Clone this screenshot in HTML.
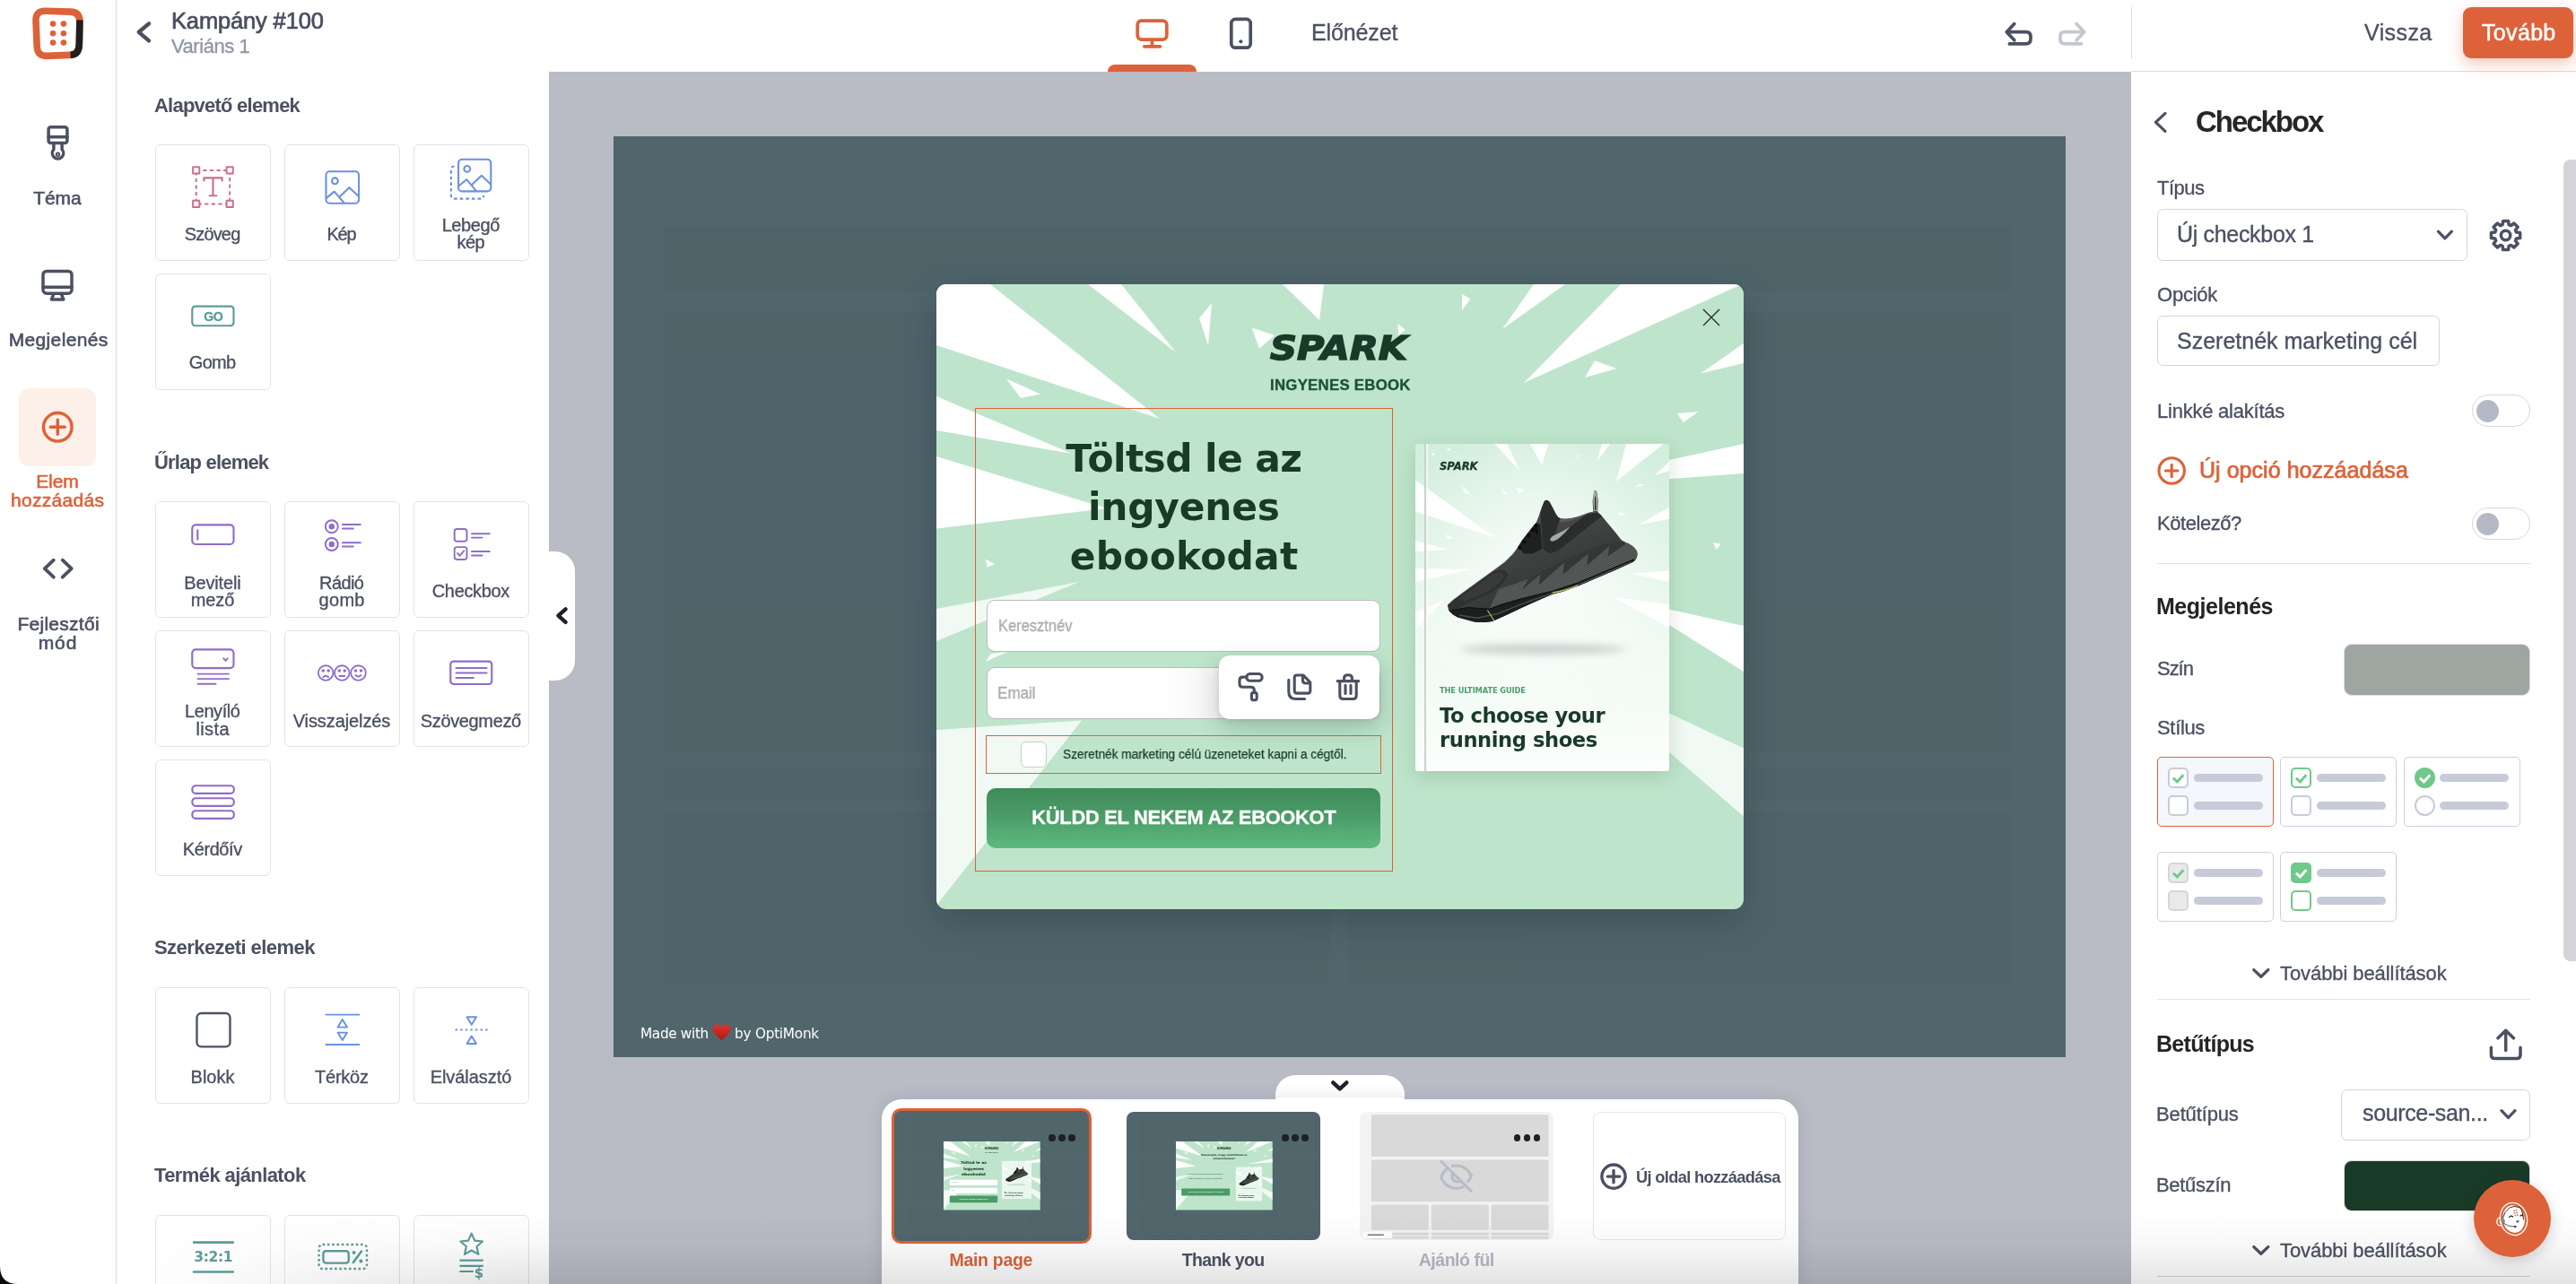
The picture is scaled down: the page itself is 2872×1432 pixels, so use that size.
<!DOCTYPE html>
<html lang="hu"><head><meta charset="utf-8"><title>OptiMonk editor</title>
<style>
*{box-sizing:border-box;margin:0;padding:0}
html,body{width:2872px;height:1432px;overflow:hidden;background:#fff}
body{position:relative;font-family:"Liberation Sans",sans-serif;color:#4b5162}
.t{position:absolute;white-space:nowrap;display:block;will-change:transform}
.a{position:absolute;display:block}
svg{position:absolute;display:block;overflow:visible}
.card{position:absolute;width:129px;height:129.5px;border:1px solid #e2e3e8;border-radius:6px;background:#fff}
.tog{position:absolute;width:65px;height:36px;border:1px solid #d5d7de;border-radius:18px;background:#fff}
.tog i{position:absolute;left:3.5px;top:4.5px;width:25px;height:25px;border-radius:50%;background:#b5b9c6}
.sc{position:absolute;width:130px;height:78px;border:1px solid #cdd0dc;border-radius:5px;background:#fff}
.sc b{position:absolute;left:39.5px;width:77.4px;height:9px;border-radius:4.5px;background:#c7cad8}
.sc u{position:absolute;left:11px;width:23px;height:23px;border-radius:5px;border:2px solid #c9ccda;background:#fff}

</style></head>
<body>

<!-- frame -->

<div class="a" style="left:612px;top:80px;width:1764px;height:1352px;background:#b9bcc5"></div>
<div class="a" style="left:684px;top:152px;width:1619px;height:1027px;background:#51666c"></div>
<div class="a" style="left:129px;top:0;width:1px;height:1432px;background:#dcdde3"></div>
<div class="a" style="left:2376px;top:8px;width:1px;height:57px;background:#d9dbe2"></div>
<div class="a" style="left:2376px;top:79px;width:496px;height:1px;background:#dcdde2"></div>

<!-- topbar -->

<svg style="left:0;top:0" width="130" height="80" viewBox="0 0 130 80">
 <path d="M50.6 12.3 L78.2 13.1 Q89.2 13.4 88.9 24.4 L88.3 50 Q88 61 77 61.4 L52.6 62.4 Q41.6 62.8 41.2 51.8 L40 23 Q39.6 12 50.6 12.3 Z" fill="none" stroke="#dd6239" stroke-width="7.6"/>
 <path d="M88.95 22.3 L88.3 50 Q88 61 78.6 61.35" fill="none" stroke="#211f1d" stroke-width="7.6"/>
 <g fill="#dd6239"><circle cx="59.1" cy="26.6" r="3.3"/><circle cx="70.9" cy="26.6" r="3.3"/><circle cx="59.1" cy="37.2" r="3.3"/><circle cx="70.9" cy="37.2" r="3.3"/><circle cx="59.1" cy="47.6" r="3.3"/><circle cx="70.9" cy="47.6" r="3.3"/></g>
</svg>
<svg style="left:0;top:0" width="2872" height="80" viewBox="0 0 2872 80" fill="none" stroke-linecap="round" stroke-linejoin="round">
 <polyline points="166,26.4 154.8,35.8 166,45.4" stroke="#4a4f5e" stroke-width="4.4"/>
 <g stroke="#dd6239" stroke-width="3.7">
  <rect x="1268.2" y="23.1" width="32.6" height="21" rx="4.5"/>
  <path d="M1284.5 44.5 V51.5 M1275.8 51.8 H1293.4"/>
 </g>
 <rect x="1235" y="72" width="99" height="16" rx="8" fill="#dd6239"/>
 <g stroke="#4b5162" stroke-width="3.7">
  <rect x="1372.8" y="21.4" width="21.4" height="31.8" rx="4.5"/>
 </g>
 <circle cx="1383.4" cy="46.3" r="2.1" fill="#4b5162"/>
 <g stroke="#4b5162" stroke-width="3.7">
  <path d="M2245.8 26.6 L2237.2 35.7 L2245.8 44.8 M2238 35.7 H2258.7 Q2264 35.7 2264 41 V43.6 Q2264 48.9 2258.7 48.9 H2240.4"/>
 </g>
 <g stroke="#c3c7cf" stroke-width="3.7">
  <path d="M2315.1 26.6 L2323.7 35.7 L2315.1 44.8 M2322.9 35.7 H2302.2 Q2296.9 35.7 2296.9 41 V43.6 Q2296.9 48.9 2302.2 48.9 H2320.5"/>
 </g>
</svg>
<div class="a" style="left:612px;top:80px;width:1764px;height:10px;background:#b9bcc5"></div>
<div class="a" style="left:2746px;top:8px;width:123px;height:57px;border-radius:9px;background:#dd6239;box-shadow:0 6px 18px rgba(221,98,57,.35)"></div>
<span class="t" id="t0" style="top:11.4px;font:400 25.5px/1 'Liberation Sans', sans-serif;color:#4a4f5e;letter-spacing:-0.15px;-webkit-text-stroke:0.7px #4a4f5e;left:190.5px;">Kampány #100</span><span class="t" id="t1" style="top:41.4px;font:400 22px/1 'Liberation Sans', sans-serif;color:#8f96a8;letter-spacing:-0.46px;-webkit-text-stroke:0.35px #8f96a8;left:190.8px;">Variáns 1</span><span class="t" id="t2" style="top:24.4px;font:400 25px/1 'Liberation Sans', sans-serif;color:#4b5162;letter-spacing:-0.12px;-webkit-text-stroke:0.35px #4b5162;left:1461.5px;">Előnézet</span><span class="t" id="t3" style="top:23.8px;font:400 25px/1 'Liberation Sans', sans-serif;color:#4b5162;letter-spacing:0.41px;-webkit-text-stroke:0.35px #4b5162;left:2636.0px;">Vissza</span><span class="t" id="t4" style="top:23.8px;font:400 25px/1 'Liberation Sans', sans-serif;color:#fff;letter-spacing:0.33px;-webkit-text-stroke:0.5px #fff;left:2767.0px;">Tovább</span>
<!-- rail -->

<div class="a" style="left:21px;top:433px;width:86px;height:87px;border-radius:12px;background:#fdf0e8"></div>
<svg style="left:0;top:120px" width="130" height="640" viewBox="0 120 130 640" fill="none" stroke-linecap="round" stroke-linejoin="round">
 <g stroke="#4b5162" stroke-width="3.5">
  <rect x="54.1" y="141.8" width="20.8" height="17.6" rx="2.5"/>
  <path d="M54.1 152.7 H74.9 M59.9 160 V166.6 A6.2 6.2 0 1 0 69.1 166.6 V160"/>
  <rect x="48" y="302.4" width="32" height="24.8" rx="4"/>
  <path d="M48 320.2 H80 M59.8 328 L57.4 334 H70.8 L68.4 328"/>
  <path d="M59.8 624.7 L49.8 634.2 L59.8 643.7 M69.7 624.7 L79.7 634.2 L69.7 643.7" stroke-width="3.8"/>
 </g>
 <circle cx="64.5" cy="172.3" r="1.7" stroke="#4b5162" stroke-width="2"/>
 <g stroke="#dd6239" stroke-width="3.4">
  <circle cx="64.3" cy="476.3" r="15.8"/>
  <path d="M64.3 468.3 V484.3 M56.3 476.3 H72.3"/>
 </g>
</svg>
<span class="t" id="t5" style="top:209.5px;font:400 21px/1 'Liberation Sans', sans-serif;color:#4b5162;letter-spacing:-0.11px;-webkit-text-stroke:0.6px #4b5162;left:-335.6px;width:800px;text-align:center;text-indent:-0.11px;">Téma</span><span class="t" id="t6" style="top:368.2px;font:400 21px/1 'Liberation Sans', sans-serif;color:#4b5162;letter-spacing:0.37px;-webkit-text-stroke:0.6px #4b5162;left:-335.3px;width:800px;text-align:center;text-indent:0.37px;">Megjelenés</span><span class="t" id="t7" style="top:526.0px;font:400 21px/1 'Liberation Sans', sans-serif;color:#dd6239;letter-spacing:-0.07px;-webkit-text-stroke:0.6px #dd6239;left:-335.6px;width:800px;text-align:center;text-indent:-0.07px;">Elem</span><span class="t" id="t8" style="top:547.2px;font:400 21px/1 'Liberation Sans', sans-serif;color:#dd6239;letter-spacing:0.28px;-webkit-text-stroke:0.6px #dd6239;left:-335.6px;width:800px;text-align:center;text-indent:0.28px;">hozzáadás</span><span class="t" id="t9" style="top:684.9px;font:400 21px/1 'Liberation Sans', sans-serif;color:#4b5162;letter-spacing:0.28px;-webkit-text-stroke:0.6px #4b5162;left:-335.5px;width:800px;text-align:center;text-indent:0.28px;">Fejlesztői</span><span class="t" id="t10" style="top:706.1px;font:400 21px/1 'Liberation Sans', sans-serif;color:#4b5162;letter-spacing:0.90px;-webkit-text-stroke:0.6px #4b5162;left:-335.6px;width:800px;text-align:center;text-indent:0.90px;">mód</span>
<!-- elements -->
<span class="t" id="t11" style="top:107.4px;font:700 22px/1 'Liberation Sans', sans-serif;color:#4b5162;letter-spacing:-0.77px;left:172.2px;">Alapvető elemek</span><div class="card" style="left:173px;top:161px"><svg width="129" height="129" viewBox="0 0 129 129" style="left:-1px;top:-1px" fill="none" stroke-linecap="round" stroke-linejoin="round"><g stroke="#cf6e8f" stroke-width="1.95"><path d="M45.7 28.9 H83.2 V66.4 H45.7 Z" stroke-dasharray="4.2 3.4" stroke-linecap="butt"/><rect x="42.1" y="25.299999999999997" width="7.2" height="7.2" fill="#fff"/><rect x="79.60000000000001" y="25.299999999999997" width="7.2" height="7.2" fill="#fff"/><rect x="42.1" y="62.800000000000004" width="7.2" height="7.2" fill="#fff"/><rect x="79.60000000000001" y="62.800000000000004" width="7.2" height="7.2" fill="#fff"/><path d="M54.4 40.5 V37.3 H74.6 V40.5 M64.5 37.3 V57.2 M60.6 57.2 H68.4" stroke-width="2.15"/></g></svg></div><span class="t" id="t12" style="top:250.9px;font:400 20px/1 'Liberation Sans', sans-serif;color:#4b5162;letter-spacing:-0.84px;-webkit-text-stroke:0.35px #4b5162;left:-162.6px;width:800px;text-align:center;text-indent:-0.84px;">Szöveg</span><div class="card" style="left:317px;top:161px"><svg width="129" height="129" viewBox="0 0 129 129" style="left:-1px;top:-1px" fill="none" stroke-linecap="round" stroke-linejoin="round"><g stroke="#6b8fe2" stroke-width="2.05"><rect x="46.5" y="30.2" width="36.6" height="35.6" rx="4"/><circle cx="56.4" cy="40.8" r="3.4"/><path d="M47.2 59.6 L55.7 52.6 L66.4 65 M61.3 58.8 L72.4 48.2 L82.4 57.6"/></g></svg></div><span class="t" id="t13" style="top:250.9px;font:400 20px/1 'Liberation Sans', sans-serif;color:#4b5162;letter-spacing:-1.20px;-webkit-text-stroke:0.35px #4b5162;left:-18.6px;width:800px;text-align:center;text-indent:-1.20px;">Kép</span><div class="card" style="left:461px;top:161px"><svg width="129" height="129" viewBox="0 0 129 129" style="left:-1px;top:-1px" fill="none" stroke-linecap="round" stroke-linejoin="round"><g stroke="#6b8fe2" stroke-width="2.05"><path d="M45.5 24.5 Q41.9 24.5 41.9 28.5 V56.5 Q41.9 60.6 46 60.6 H74 Q78.2 60.6 78.2 57" stroke-dasharray="3.6 3" stroke-linecap="butt"/><rect x="50.1" y="16.8" width="36.2" height="35.6" rx="4"/><circle cx="59.8" cy="27.4" r="3.4"/><path d="M50.6 46.2 L59.1 39.2 L69.80000000000001 51.6 M64.7 45.4 L75.80000000000001 34.800000000000004 L85.80000000000001 44.2"/></g></svg></div><span class="t" id="t14" style="top:240.9px;font:400 20px/1 'Liberation Sans', sans-serif;color:#4b5162;letter-spacing:-0.41px;-webkit-text-stroke:0.35px #4b5162;left:125.4px;width:800px;text-align:center;text-indent:-0.41px;">Lebegő</span><span class="t" id="t15" style="top:259.8px;font:400 20px/1 'Liberation Sans', sans-serif;color:#4b5162;letter-spacing:-0.62px;-webkit-text-stroke:0.35px #4b5162;left:125.4px;width:800px;text-align:center;text-indent:-0.62px;">kép</span><div class="card" style="left:173px;top:305px"><svg width="129" height="129" viewBox="0 0 129 129" style="left:-1px;top:-1px" fill="none" stroke-linecap="round" stroke-linejoin="round"><rect x="41.3" y="36.6" width="46.2" height="21.6" rx="3.5" stroke="#5b9d99" stroke-width="2.15"/></svg></div><span class="t" id="t16" style="top:394.0px;font:400 20px/1 'Liberation Sans', sans-serif;color:#4b5162;letter-spacing:-0.66px;-webkit-text-stroke:0.35px #4b5162;left:-162.6px;width:800px;text-align:center;text-indent:-0.66px;">Gomb</span><span class="t" id="t17" style="top:345.5px;font:700 14.2px/1 'Liberation Sans', sans-serif;color:#5b9d99;letter-spacing:-0.37px;-webkit-text-stroke:0.3px #5b9d99;left:-162.5px;width:800px;text-align:center;text-indent:-0.37px;">GO</span><span class="t" id="t18" style="top:505.2px;font:700 22px/1 'Liberation Sans', sans-serif;color:#4b5162;letter-spacing:-0.81px;left:172.2px;">Űrlap elemek</span><div class="card" style="left:173px;top:559px"><svg width="129" height="129" viewBox="0 0 129 129" style="left:-1px;top:-1px" fill="none" stroke-linecap="round" stroke-linejoin="round"><g stroke="#8f6dc9" stroke-width="2.15"><rect x="41.3" y="26.4" width="46.2" height="21.6" rx="4"/><path d="M47.3 32.4 V42.6"/></g></svg></div><span class="t" id="t19" style="top:639.5px;font:400 20px/1 'Liberation Sans', sans-serif;color:#4b5162;letter-spacing:-0.13px;-webkit-text-stroke:0.35px #4b5162;left:-162.6px;width:800px;text-align:center;text-indent:-0.13px;">Beviteli</span><span class="t" id="t20" style="top:659.4px;font:400 20px/1 'Liberation Sans', sans-serif;color:#4b5162;letter-spacing:-0.07px;-webkit-text-stroke:0.35px #4b5162;left:-162.6px;width:800px;text-align:center;text-indent:-0.07px;">mező</span><div class="card" style="left:317px;top:559px"><svg width="129" height="129" viewBox="0 0 129 129" style="left:-1px;top:-1px" fill="none" stroke-linecap="round" stroke-linejoin="round"><g stroke="#8f6dc9" stroke-width="1.95"><circle cx="52.8" cy="28.2" r="7"/><circle cx="52.8" cy="48" r="7"/><circle cx="52.8" cy="28.2" r="3.2" fill="#8f6dc9" stroke="none"/><circle cx="52.8" cy="48" r="3.2" fill="#8f6dc9" stroke="none"/><path d="M64.8 26 H84.8 M64.8 30.4 H76.8 M64.8 46.2 H84.8 M64.8 50.5 H76.8"/></g></svg></div><span class="t" id="t21" style="top:639.5px;font:400 20px/1 'Liberation Sans', sans-serif;color:#4b5162;letter-spacing:-0.59px;-webkit-text-stroke:0.35px #4b5162;left:-18.6px;width:800px;text-align:center;text-indent:-0.59px;">Rádió</span><span class="t" id="t22" style="top:659.4px;font:400 20px/1 'Liberation Sans', sans-serif;color:#4b5162;letter-spacing:0.32px;-webkit-text-stroke:0.35px #4b5162;left:-18.6px;width:800px;text-align:center;text-indent:0.32px;">gomb</span><div class="card" style="left:461px;top:559px"><svg width="129" height="129" viewBox="0 0 129 129" style="left:-1px;top:-1px" fill="none" stroke-linecap="round" stroke-linejoin="round"><g stroke="#8f6dc9" stroke-width="1.95"><rect x="45.7" y="30.9" width="13.8" height="13.8" rx="2.6"/><rect x="45.7" y="51.1" width="13.8" height="13.8" rx="2.6"/><path d="M49 58 L51.6 60.8 L56.4 55.2 M65 36.2 H84.8 M65 40.6 H76.6 M65 56 H84.8 M65 60.4 H76.6"/></g></svg></div><span class="t" id="t23" style="top:648.9px;font:400 20px/1 'Liberation Sans', sans-serif;color:#4b5162;letter-spacing:-0.36px;-webkit-text-stroke:0.35px #4b5162;left:125.4px;width:800px;text-align:center;text-indent:-0.36px;">Checkbox</span><div class="card" style="left:173px;top:703px"><svg width="129" height="129" viewBox="0 0 129 129" style="left:-1px;top:-1px" fill="none" stroke-linecap="round" stroke-linejoin="round"><g stroke="#8f6dc9" stroke-width="2.15"><rect x="41.3" y="21.3" width="46.2" height="20.8" rx="4"/><path d="M76.2 31.4 L78.5 33.7 L80.8 31.4 M47.5 48.6 H82 M47.5 54.1 H82 M47.5 59.7 H67.5" stroke-width="1.95"/></g></svg></div><span class="t" id="t24" style="top:782.9px;font:400 20px/1 'Liberation Sans', sans-serif;color:#4b5162;letter-spacing:-0.42px;-webkit-text-stroke:0.35px #4b5162;left:-162.6px;width:800px;text-align:center;text-indent:-0.42px;">Lenyíló</span><span class="t" id="t25" style="top:802.7px;font:400 20px/1 'Liberation Sans', sans-serif;color:#4b5162;letter-spacing:0.41px;-webkit-text-stroke:0.35px #4b5162;left:-162.6px;width:800px;text-align:center;text-indent:0.41px;">lista</span><div class="card" style="left:317px;top:703px"><svg width="129" height="129" viewBox="0 0 129 129" style="left:-1px;top:-1px" fill="none" stroke-linecap="round" stroke-linejoin="round"><g stroke="#8f6dc9" stroke-width="1.85"><circle cx="46.2" cy="47.5" r="8.3"/><circle cx="43.2" cy="45" r="0.9" fill="#8f6dc9"/><circle cx="49.2" cy="45" r="0.9" fill="#8f6dc9"/><path d="M43.2 52.2 Q46.2 49.4 49.2 52.2"/><circle cx="64.3" cy="47.5" r="8.3"/><circle cx="61.3" cy="45" r="0.9" fill="#8f6dc9"/><circle cx="67.3" cy="45" r="0.9" fill="#8f6dc9"/><path d="M61.3 51 H67.3"/><circle cx="82.5" cy="47.5" r="8.3"/><circle cx="79.5" cy="45" r="0.9" fill="#8f6dc9"/><circle cx="85.5" cy="45" r="0.9" fill="#8f6dc9"/><path d="M79.5 50 Q82.5 53 85.5 50"/></g></svg></div><span class="t" id="t26" style="top:793.6px;font:400 20px/1 'Liberation Sans', sans-serif;color:#4b5162;letter-spacing:-0.09px;-webkit-text-stroke:0.35px #4b5162;left:-18.6px;width:800px;text-align:center;text-indent:-0.09px;">Visszajelzés</span><div class="card" style="left:461px;top:703px"><svg width="129" height="129" viewBox="0 0 129 129" style="left:-1px;top:-1px" fill="none" stroke-linecap="round" stroke-linejoin="round"><g stroke="#8f6dc9" stroke-width="2.15"><rect x="41.3" y="34.6" width="46" height="25.4" rx="3.5"/><path d="M47.5 42 H81.6 M47.5 47.5 H81.6 M47.5 53 H67" stroke-width="1.95"/></g></svg></div><span class="t" id="t27" style="top:793.6px;font:400 20px/1 'Liberation Sans', sans-serif;color:#4b5162;letter-spacing:-0.36px;-webkit-text-stroke:0.35px #4b5162;left:125.4px;width:800px;text-align:center;text-indent:-0.36px;">Szövegmező</span><div class="card" style="left:173px;top:847px"><svg width="129" height="129" viewBox="0 0 129 129" style="left:-1px;top:-1px" fill="none" stroke-linecap="round" stroke-linejoin="round"><g stroke="#8f6dc9" stroke-width="2.15"><rect x="41.4" y="29.2" width="46.4" height="8.6" rx="3.6"/><rect x="41.4" y="43.2" width="46.4" height="8.6" rx="3.6"/><rect x="41.4" y="57.2" width="46.4" height="8.6" rx="3.6"/></g></svg></div><span class="t" id="t28" style="top:937.3px;font:400 20px/1 'Liberation Sans', sans-serif;color:#4b5162;letter-spacing:-0.42px;-webkit-text-stroke:0.35px #4b5162;left:-162.6px;width:800px;text-align:center;text-indent:-0.42px;">Kérdőív</span><span class="t" id="t29" style="top:1046.2px;font:700 22px/1 'Liberation Sans', sans-serif;color:#4b5162;letter-spacing:-0.56px;left:172.2px;">Szerkezeti elemek</span><div class="card" style="left:173px;top:1101px"><svg width="129" height="129" viewBox="0 0 129 129" style="left:-1px;top:-1px" fill="none" stroke-linecap="round" stroke-linejoin="round"><rect x="46.5" y="29" width="37" height="37.4" rx="5" stroke="#4b5162" stroke-width="2.35"/></svg></div><span class="t" id="t30" style="top:1190.9px;font:400 20px/1 'Liberation Sans', sans-serif;color:#4b5162;letter-spacing:-0.03px;-webkit-text-stroke:0.35px #4b5162;left:-162.6px;width:800px;text-align:center;text-indent:-0.03px;">Blokk</span><div class="card" style="left:317px;top:1101px"><svg width="129" height="129" viewBox="0 0 129 129" style="left:-1px;top:-1px" fill="none" stroke-linecap="round" stroke-linejoin="round"><g stroke="#6b8fe2" stroke-width="1.95"><path d="M46.4 30.6 H83.4 M46.4 64 H83.4"/><path d="M64.8 36.1 L70.0 44.6 H59.599999999999994 Z"/><path d="M64.8 59.1 L70.0 50.6 H59.599999999999994 Z"/></g></svg></div><span class="t" id="t31" style="top:1190.9px;font:400 20px/1 'Liberation Sans', sans-serif;color:#4b5162;letter-spacing:-0.27px;-webkit-text-stroke:0.35px #4b5162;left:-18.6px;width:800px;text-align:center;text-indent:-0.27px;">Térköz</span><div class="card" style="left:461px;top:1101px"><svg width="129" height="129" viewBox="0 0 129 129" style="left:-1px;top:-1px" fill="none" stroke-linecap="round" stroke-linejoin="round"><g stroke="#6b8fe2" stroke-width="1.95"><path d="M46.6 47.5 H84" stroke-dasharray="2.4 3.2" stroke-linecap="butt"/><path d="M64.8 41.7 L70.0 33.2 H59.599999999999994 Z"/><path d="M64.8 54.5 L70.0 63 H59.599999999999994 Z"/></g></svg></div><span class="t" id="t32" style="top:1190.9px;font:400 20px/1 'Liberation Sans', sans-serif;color:#4b5162;letter-spacing:-0.05px;-webkit-text-stroke:0.35px #4b5162;left:125.4px;width:800px;text-align:center;text-indent:-0.05px;">Elválasztó</span><span class="t" id="t33" style="top:1299.9px;font:700 22px/1 'Liberation Sans', sans-serif;color:#4b5162;letter-spacing:-0.60px;left:172.2px;">Termék ajánlatok</span><div class="card" style="left:173px;top:1355px"><svg width="129" height="129" viewBox="0 0 129 129" style="left:-1px;top:-1px" fill="none" stroke-linecap="round" stroke-linejoin="round"><path d="M43 30.6 H86.8 M43 63.4 H86.8" stroke="#5b9d99" stroke-width="2.55"/></svg></div><span class="t" id="t34" style="top:1394.5px;font:700 15.5px/1 'DejaVu Sans', 'Liberation Sans', sans-serif;color:#5b9d99;letter-spacing:-0.37px;left:-162.2px;width:800px;text-align:center;text-indent:-0.37px;">3:2:1</span><div class="card" style="left:317px;top:1355px"><svg width="129" height="129" viewBox="0 0 129 129" style="left:-1px;top:-1px" fill="none" stroke-linecap="round" stroke-linejoin="round"><g stroke="#5b9d99" stroke-width="2.35"><rect x="38.6" y="33" width="53.4" height="27" rx="4" stroke-dasharray="2.6 2.7" stroke-linecap="butt"/><rect x="43.4" y="40.2" width="28.4" height="13.4" rx="3"/><path d="M76.8 53 L86 40.6" stroke-width="2.55"/></g><circle cx="77.6" cy="42" r="2" fill="#5b9d99"/><circle cx="85.4" cy="51.6" r="2" fill="#5b9d99"/></svg></div><div class="card" style="left:461px;top:1355px"><svg width="129" height="129" viewBox="0 0 129 129" style="left:-1px;top:-1px" fill="none" stroke-linecap="round" stroke-linejoin="round"><g stroke="#5b9d99" stroke-width="2.15"><path d="M64.7 20.6 L68.3 28.6 L77 29.5 L70.5 35.3 L72.4 43.9 L64.7 39.5 L57 43.9 L58.9 35.3 L52.4 29.5 L61.1 28.6 Z"/><path d="M52.2 50.6 H77 M52.2 56.8 H77 M52.2 63 H66"/></g></svg></div><span class="t" id="t35" style="top:1412.7px;font:700 15px/1 'DejaVu Sans', 'Liberation Sans', sans-serif;color:#5b9d99;left:133.6px;width:800px;text-align:center;">$</span>
<!-- canvas -->

<div class="a" style="left:612px;top:615px;width:29px;height:144px;border-radius:0 22px 22px 0;background:#fff"></div>
<svg style="left:612px;top:670px" width="30" height="34" viewBox="0 0 30 34" fill="none" stroke="#1f2126" stroke-width="4.4" stroke-linecap="round" stroke-linejoin="round"><path d="M18.6 9.4 L10.4 16.6 L18.6 23.8"/></svg>
<svg style="left:684px;top:152px" width="1619" height="1027" viewBox="0 0 1619 1027" fill="#4e6369" opacity=".55">
 <rect x="56" y="100" width="1502" height="72"/><rect x="56" y="196" width="1502" height="491"/>
 <rect x="56" y="704" width="1502" height="36" opacity=".6"/>
 <rect x="56" y="755" width="743" height="192"/><rect x="819" y="755" width="739" height="192"/>
</svg>
<span class="t" id="t36" style="top:1145.5px;font:400 15.3px/1 'DejaVu Sans', 'Liberation Sans', sans-serif;color:#fff;letter-spacing:-0.34px;left:713.6px;">Made with</span><span class="t" id="t37" style="top:1145.5px;font:400 15.3px/1 'DejaVu Sans', 'Liberation Sans', sans-serif;color:#fff;letter-spacing:-0.25px;left:819.0px;">by OptiMonk</span><svg style="left:793.5px;top:1142px" width="21" height="19" viewBox="0 0 21 19"><defs><linearGradient id="hg" x1="0" y1="0" x2="0" y2="1"><stop offset="0" stop-color="#e0332b"/><stop offset="1" stop-color="#a81d18"/></linearGradient></defs><path d="M10.5 18.4 C4.6 13.6 0.6 9.9 0.6 5.6 C0.6 2.6 2.9 0.6 5.6 0.6 C7.7 0.6 9.5 1.8 10.5 3.6 C11.5 1.8 13.3 0.6 15.4 0.6 C18.1 0.6 20.4 2.6 20.4 5.6 C20.4 9.9 16.4 13.6 10.5 18.4 Z" fill="url(#hg)"/></svg>
<!-- popup -->

<div class="a" style="left:1044px;top:317px;width:900px;height:697px;border-radius:11px;background:#bee5cb;box-shadow:0 14px 40px rgba(20,35,40,.28);overflow:hidden">
 <svg width="900" height="697" viewBox="0 0 900 697" style="left:0;top:0"><polygon points="0,0 60,0 249,150 0,68" fill="#fff"/><polygon points="169,0 206,0 267,76" fill="#fff"/><polygon points="0,125 0,163 151,189" fill="#fff"/><polygon points="0,192 190,250 0,272.5" fill="#fff"/><polygon points="386,0 432,0 427,40" fill="#fff"/><polygon points="666,0 701,0 631,50" fill="#fff"/><polygon points="655,110 763,0 898,0" fill="#fff"/><polygon points="852,99.5 900,66 900,88" fill="#fff"/><polygon points="669,228 900,178 900,211" fill="#fff"/><polygon points="774,353 900,381 900,432" fill="#fff"/><polygon points="78,105.5 116,122.6 94,127" fill="#fff"/><polygon points="293,38 307,21 303,68" fill="#fff"/><polygon points="351.7,48.5 377,57 360,71.7" fill="#fff"/><polygon points="514.3,44.3 523,50.8 515.5,57" fill="#fff"/><polygon points="586,11 595.4,16.3 586,29" fill="#fff"/><polygon points="734,85.2 758.4,94 723,104" fill="#fff"/><polygon points="825.7,144.1 849.5,142.3 832.7,153.9" fill="#fff"/><polygon points="865.8,288 874.7,289.5 869.8,296" fill="#fff"/><polygon points="54.5,306.6 65,312 57,315.6" fill="#fff"/><polygon points="55,421 61,412 78.6,410" fill="#fff"/><polygon points="0,362 159,332 0,398" fill="#fff" opacity="0.76"/><polygon points="0,497 162,486.5 3,689 0,697" fill="#fff" opacity="0.76"/><polygon points="707,427 900,517.6 900,593.6" fill="#fff" opacity="0.76"/></svg>
</div>
<!-- book -->
<div class="a" style="left:1578px;top:495px;width:283px;height:365px;border-radius:3px;background:linear-gradient(180deg,#d3eedc 0%,#dcf2e4 30%,#eef9f2 58%,#fbfefc 100%);box-shadow:0 6px 22px rgba(30,60,40,.16);overflow:hidden">
 <svg width="283" height="365" viewBox="0 0 283 365" style="left:0;top:0"><defs><filter id="bl" x="-20%" y="-100%" width="140%" height="300%"><feGaussianBlur stdDeviation="7 4"/></filter><radialGradient id="bg" cx="50%" cy="48%" r="58%"><stop offset="0" stop-color="#fff" stop-opacity=".85"/><stop offset=".5" stop-color="#fff" stop-opacity=".45"/><stop offset="1" stop-color="#fff" stop-opacity="0"/></radialGradient></defs>
 <rect width="283" height="300" fill="url(#bg)"/><g opacity=".95"><polygon points="88.3,0 102.5,0 116.7,30.2" fill="#fff"/><polygon points="127.6,0 148.5,0 141,23.5" fill="#fff"/><polygon points="208,0 217.2,0 202.1,20.1" fill="#fff"/><polygon points="234.8,0 276.6,0 223.9,41.9" fill="#fff"/><polygon points="283,20.1 283,30.2 266.6,35.2" fill="#fff"/><polygon points="283,70.4 283,83.8 248.2,90.5" fill="#fff"/><polygon points="283,141.5 283,154 239.8,144.9" fill="#fff"/><polygon points="283,179.2 283,205 219.7,170.8" fill="#fff"/><polygon points="0,40.2 90.8,105.5 0,75.4" fill="#fff"/><polygon points="0,108 0,120.6 37.2,118.1" fill="#fff"/><polygon points="0,139 0,154.1 64,139.8" fill="#fff"/><polygon points="0,187.6 0,208 32.2,174.2" fill="#fff"/><polygon points="17.1,10.1 21.3,10.9 20.5,13.4" fill="#fff"/><polygon points="34.7,5.9 38.9,5.1 38,8.4" fill="#fff"/><polygon points="53.1,46.9 62.3,57 53.9,54.5" fill="#fff"/><polygon points="95.8,47.8 103.3,57.8 98.3,55.3" fill="#fff"/><polygon points="112.5,48.6 121.8,51.1 115.1,56.1" fill="#fff"/><polygon points="181.2,11.8 182.9,13.4 180.3,16" fill="#fff"/><polygon points="244.8,48.6 255.7,46.1 250.7,44.4" fill="#fff"/><polygon points="225.5,76.2 235.6,78.7 228,79.6" fill="#fff"/><polygon points="33,101.3 42.2,104.7 36.4,106.4" fill="#fff"/></g>
 <rect x="10" y="0" width="2.2" height="365" fill="#c9d2cc"/><rect x="12.2" y="0" width="1.6" height="365" fill="#fff" opacity=".8"/>
 
<ellipse cx="142" cy="229" rx="92" ry="6" fill="#20302a" opacity=".2" filter="url(#bl)"/>
<svg x="-8" y="-10" width="300" height="215" viewBox="0 0 1792 1284">
 <defs><linearGradient id="sg" x1="0.2" y1="0" x2="0.8" y2="1"><stop offset="0" stop-color="#555856"/><stop offset=".55" stop-color="#3c3e3d"/><stop offset="1" stop-color="#2a2c2b"/></linearGradient>
 <pattern id="ht" width="11" height="11" patternUnits="userSpaceOnUse" patternTransform="rotate(62)"><rect width="11" height="11" fill="#666967"/><rect width="5" height="11" fill="#3b3d3c"/></pattern></defs>
 <path d="M262 1135 L300 1100 L380 1040 L470 975 L560 910 L640 850 L700 790 L730 748 L760 700 L800 650 L830 610 L852 586 L870 540 L890 480 L905 445 Q920 424 940 445 L960 480 L985 530 Q998 552 1012 556 Q1060 566 1130 545 L1200 520 L1232 512 L1228 440 L1238 380 Q1246 356 1258 385 L1265 440 L1262 515 L1290 540 L1330 590 L1380 650 L1420 700 L1445 715 Q1500 735 1522 772 Q1534 806 1512 834 Q1496 848 1478 856 L1380 900 L1250 955 L1130 1008 L1040 1040 L960 1062 L860 1105 L760 1150 L660 1198 L560 1243 Q500 1252 440 1245 L330 1215 Q285 1195 268 1165 Z" fill="url(#sg)"/>
 <path d="M1236 384 Q1246 360 1256 388 L1262 440 L1259 508 L1236 508 L1232 440 Z" fill="#a4aba6"/><path d="M1243 420 Q1246 396 1250 420 L1252 500 L1242 500 Z" fill="#262827"/>
 <path d="M880 520 L905 445 Q920 424 940 445 L960 480 L985 530 Q998 552 1012 556 L985 640 L968 700 L1200 520 L1262 515 L1290 540 L1000 770 L940 792 L898 760 Z" fill="#2b2d2c"/>
 <path d="M1012 556 Q1060 566 1130 545 L1200 520 L1232 512 L1262 515 L1200 524 L1130 556 Q1060 584 1006 580 Z" fill="#595c5a"/>
 <path d="M730 748 L760 700 L800 650 L830 610 L852 586 L880 596 L892 760 L830 792 L772 792 Z" fill="#1f2121"/>
 <g fill="#0d0d0d"><circle cx="744" cy="752" r="13"/><circle cx="772" cy="712" r="13"/><circle cx="802" cy="672" r="13"/><circle cx="830" cy="634" r="13"/><circle cx="852" cy="604" r="12"/><path d="M838 600 L852 594 L866 660 L852 664 Z"/></g>
 <path d="M946 692 Q958 672 988 662 Q1036 640 1078 612 Q1044 656 1004 688 Q972 712 952 708 Q942 702 946 692 Z" fill="#a6a9a6"/>
 <path d="M262 1135 L300 1100 L380 1040 L470 975 L560 910 Q640 876 666 932 Q640 1004 540 1060 L400 1120 L290 1168 Z" fill="#2f3130"/>
 <path d="M330 1095 L560 930 Q620 900 640 940 Q610 1000 520 1046 L380 1108 Z" fill="#3c3f3d" opacity=".8"/>
 <path d="M600 1030 L700 985 L800 960 L900 900 L1040 830 L1180 770 L1320 720 L1445 715 Q1500 735 1522 772 Q1534 806 1512 834 L1500 830 L1380 880 L1130 985 L960 1040 L760 1090 L620 1130 L540 1160 Z" fill="url(#ht)"/>
 <path d="M600 1030 L700 985 L800 960 L760 1030 L880 930 L870 1000 L1040 850 L1030 930 L1200 790 L1190 870 L1340 740 L1330 810 L1445 728 L1445 715 L1320 720 L1180 770 L1040 830 L900 900 L800 960 Z" fill="#353736"/>
 <path d="M268 1165 L290 1168 L400 1150 L540 1160 L620 1130 L760 1090 L960 1040 L1130 985 L1380 880 L1500 830 L1512 834 Q1496 848 1478 856 L1380 900 L1250 955 L1130 1008 L1040 1040 L960 1062 L860 1105 L760 1150 L660 1198 L560 1243 Q500 1252 440 1245 L330 1215 Q285 1195 268 1165 Z" fill="#1d1f1e"/>
 <path d="M340 1200 L460 1220 L600 1190 L760 1125 L960 1055 L1130 1000 L1380 892 L1490 846" fill="none" stroke="#4a4d4b" stroke-width="9"/>
 <path d="M290 1168 L400 1150 L540 1160 L620 1130 L760 1090 L960 1040 L1130 985 L1380 880 L1500 830" fill="none" stroke="#0f1010" stroke-width="6"/>
 <path d="M262 1135 L300 1100 L380 1040 L470 975 L560 910 L640 850" fill="none" stroke="#6a6d6b" stroke-width="6" opacity=".55"/>
 <path d="M960 1050 Q1060 1040 1130 1002" fill="none" stroke="#c6d26c" stroke-width="8"/><path d="M528 1168 L572 1238" fill="none" stroke="#bccb66" stroke-width="6"/>
</svg>
 </svg>
</div>
<!-- form block outline -->
<div class="a" style="left:1087px;top:454.5px;width:466px;height:517px;border:1.5px solid #dd6239"></div>
<div class="a" style="left:1100px;top:669px;width:439px;height:58px;border-radius:9px;background:#fff;border:1.5px solid #b9bcba"></div>
<div class="a" style="left:1100px;top:743.8px;width:439px;height:58.6px;border-radius:9px;background:linear-gradient(90deg,#fff 0%,#fff 45%,#f1f1f1 62%);border:1.5px solid #b9bcba"></div>
<div class="a" style="left:1099px;top:820px;width:441px;height:42.5px;border:1.5px solid #dd6239"></div>
<div class="a" style="left:1138px;top:827px;width:29px;height:29px;border-radius:6px;background:#fff;border:1.5px solid #c9cccb"></div>
<div class="a" style="left:1100px;top:879px;width:439px;height:67px;border-radius:10px;background:linear-gradient(180deg,#3f8c5b 0%,#4a9b67 45%,#5cbb7e 100%)"></div>
<!-- toolbar -->
<div class="a" style="left:1358.8px;top:731px;width:179.2px;height:71px;border-radius:12px;background:#fff;box-shadow:0 10px 28px rgba(30,50,40,.22),0 2px 6px rgba(30,50,40,.10)"></div>
<svg style="left:1370px;top:740px" width="160" height="50" viewBox="1370 740 160 50" fill="none" stroke="#4b5162" stroke-width="3.1" stroke-linecap="round" stroke-linejoin="round">
 <rect x="1389.9" y="751.5" width="17.2" height="7.8" rx="3.6"/>
 <path d="M1389.9 755.1 H1385.6 Q1382 755.1 1382 758.7 V762.7 Q1382 766.3 1385.6 766.3 H1394.8 Q1398.3 766.3 1398.3 769.8 V771.6"/>
 <rect x="1395.4" y="772.4" width="5.8" height="8.4" rx="2.4"/>
 <path d="M1445.8 753 H1453.1 L1460.8 761.1 V770.5 Q1460.8 773.1 1458.2 773.1 H1446.2 Q1443.2 773.1 1443.2 770.5 V755.6 Q1443.2 753 1445.8 753 Z M1452.4 753.6 V758.6 Q1452.4 762 1455.8 762 H1460.4 M1436.8 758.3 V771.4 Q1436.8 779.5 1444.9 779.5 H1454.6"/>
 <path d="M1491.2 759.6 H1514.8 M1498.6 759 V756 Q1498.6 752.7 1503 752.7 Q1507.4 752.7 1507.4 756 V759 M1493.8 760.6 V775.7 Q1493.8 779.5 1497.6 779.5 H1508.4 Q1512.2 779.5 1512.2 775.7 V760.6 M1500 764.4 V773.4 M1506 764.4 V773.4"/>
</svg>
<svg style="left:1898px;top:344px" width="20" height="20" viewBox="0 0 20 20" stroke="#2b2b2b" stroke-width="1.4"><path d="M1 1 L19 19 M19 1 L1 19"/></svg>
<span class="t" id="t38" style="top:370.1px;font:italic 700 37.2px/1 'DejaVu Sans', 'Liberation Sans', sans-serif;color:#1a3a28;-webkit-text-stroke:1.6px #1a3a28;left:1416.0px;transform:scaleX(1.1169);transform-origin:left center;">SPARK</span><span class="t" id="t39" style="top:421.8px;font:700 16.8px/1 'Liberation Sans', sans-serif;color:#1e5135;letter-spacing:0.27px;-webkit-text-stroke:0.35px #1e5135;left:1416.0px;">INGYENES EBOOK</span><span class="t" id="t40" style="top:491.2px;font:700 42.4px/1 'DejaVu Sans', 'Liberation Sans', sans-serif;color:#1a3a28;letter-spacing:-0.62px;left:919.6px;width:800px;text-align:center;text-indent:-0.62px;">Töltsd le az</span><span class="t" id="t41" style="top:545.1px;font:700 42.4px/1 'DejaVu Sans', 'Liberation Sans', sans-serif;color:#1a3a28;letter-spacing:-0.21px;left:919.8px;width:800px;text-align:center;text-indent:-0.21px;">ingyenes</span><span class="t" id="t42" style="top:599.5px;font:700 42.4px/1 'DejaVu Sans', 'Liberation Sans', sans-serif;color:#1a3a28;letter-spacing:0.21px;left:919.8px;width:800px;text-align:center;text-indent:0.21px;">ebookodat</span><span class="t" id="t43" style="top:688.6px;font:400 18.6px/1 'Liberation Sans', sans-serif;color:#a8acaa;-webkit-text-stroke:0.35px #a8acaa;left:1112.6px;transform:scaleX(0.8862);transform-origin:left center;">Keresztnév</span><span class="t" id="t44" style="top:763.7px;font:400 18.6px/1 'Liberation Sans', sans-serif;color:#a8acaa;-webkit-text-stroke:0.35px #a8acaa;left:1112.4px;transform:scaleX(0.9146);transform-origin:left center;">Email</span><span class="t" id="t45" style="top:833.3px;font:400 15.2px/1 'Liberation Sans', sans-serif;color:#1a3a28;-webkit-text-stroke:0.25px #1a3a28;left:1185.3px;transform:scaleX(0.8989);transform-origin:left center;">Szeretnék marketing célú üzeneteket kapni a cégtől.</span><span class="t" id="t46" style="top:900.7px;font:700 21.9px/1 'Liberation Sans', sans-serif;color:#fff;letter-spacing:-0.30px;-webkit-text-stroke:0.3px #fff;left:919.8px;width:800px;text-align:center;text-indent:-0.30px;">KÜLDD EL NEKEM AZ EBOOKOT</span><span class="t" id="t47" style="top:515.1px;font:italic 700 11.6px/1 'DejaVu Sans', 'Liberation Sans', sans-serif;color:#1a3a28;letter-spacing:-0.02px;-webkit-text-stroke:0.3px #1a3a28;left:1605.4px;">SPARK</span><span class="t" id="t48" style="top:765.7px;font:700 8.3px/1 'DejaVu Sans', 'Liberation Sans', sans-serif;color:#4e9e6c;letter-spacing:-0.12px;left:1605.4px;">THE ULTIMATE GUIDE</span><span class="t" id="t49" style="top:786.5px;font:700 22.6px/1 'DejaVu Sans', 'Liberation Sans', sans-serif;color:#1a3a28;letter-spacing:-0.45px;left:1605.0px;">To choose your</span><span class="t" id="t50" style="top:814.4px;font:700 22.6px/1 'DejaVu Sans', 'Liberation Sans', sans-serif;color:#1a3a28;letter-spacing:-0.41px;left:1605.0px;">running shoes</span>
<!-- pages -->

<div class="a" style="left:1421.5px;top:1198.5px;width:144.5px;height:40px;border-radius:22px 22px 0 0;background:#fff"></div>
<div class="a" style="left:982.5px;top:1226px;width:1022.5px;height:220px;border-radius:22px 22px 0 0;background:#fff;box-shadow:0 0 18px rgba(60,65,80,.16)"></div>
<div class="a" style="left:1424px;top:1224px;width:140px;height:6px;background:#fff"></div>
<svg style="left:1480px;top:1202px" width="28" height="18" viewBox="0 0 28 18" fill="none" stroke="#1f2126" stroke-width="4.4" stroke-linecap="round" stroke-linejoin="round"><path d="M6.2 5.4 L13.8 12.4 L21.4 5.4"/></svg>
<div class="a" style="left:994px;top:1236.3px;width:222.5px;height:151.2px;border-radius:10.5px;border:3.4px solid #dd6239;background:#51666c;overflow:hidden"><div class="a" style="left:0;top:0"><svg width="216" height="143" viewBox="0 0 216 143" style="left:0;top:0" stroke="#5a6f75" stroke-width="1" opacity=".55"><path d="M12 0 V143 M0 52 H216 M0 103 H216 M0 136 H216 M79 103 V143 M146 103 V143"/></svg></div></div><div class="a" style="left:1256px;top:1240px;width:216px;height:143.3px;border-radius:8px;background:#51666c;overflow:hidden"><svg width="216" height="143" viewBox="0 0 216 143" style="left:0;top:0" stroke="#5a6f75" stroke-width="1" opacity=".55"><path d="M12 0 V143 M0 52 H216 M0 103 H216 M0 136 H216 M79 103 V143 M146 103 V143"/></svg></div><svg style="left:1052px;top:1273.1px" width="107.7" height="76.5" viewBox="0 0 900 697" preserveAspectRatio="none"><rect width="900" height="697" fill="#bee5cb"/><polygon points="0,0 60,0 249,150 0,68" fill="#fff"/><polygon points="169,0 206,0 267,76" fill="#fff"/><polygon points="0,125 0,163 151,189" fill="#fff"/><polygon points="0,192 190,250 0,272.5" fill="#fff"/><polygon points="386,0 432,0 427,40" fill="#fff"/><polygon points="666,0 701,0 631,50" fill="#fff"/><polygon points="655,110 763,0 898,0" fill="#fff"/><polygon points="852,99.5 900,66 900,88" fill="#fff"/><polygon points="669,228 900,178 900,211" fill="#fff"/><polygon points="774,353 900,381 900,432" fill="#fff"/><polygon points="78,105.5 116,122.6 94,127" fill="#fff"/><polygon points="293,38 307,21 303,68" fill="#fff"/><polygon points="351.7,48.5 377,57 360,71.7" fill="#fff"/><polygon points="514.3,44.3 523,50.8 515.5,57" fill="#fff"/><polygon points="586,11 595.4,16.3 586,29" fill="#fff"/><polygon points="734,85.2 758.4,94 723,104" fill="#fff"/><polygon points="825.7,144.1 849.5,142.3 832.7,153.9" fill="#fff"/><polygon points="865.8,288 874.7,289.5 869.8,296" fill="#fff"/><polygon points="54.5,306.6 65,312 57,315.6" fill="#fff"/><polygon points="55,421 61,412 78.6,410" fill="#fff"/><polygon points="0,362 159,332 0,398" fill="#fff" opacity="0.76"/><polygon points="0,497 162,486.5 3,689 0,697" fill="#fff" opacity="0.76"/><polygon points="707,427 900,517.6 900,593.6" fill="#fff" opacity="0.76"/><rect x="57" y="389" width="446" height="57" rx="9" fill="#fff"/><rect x="57" y="472" width="446" height="57" rx="9" fill="#fff"/>
<rect x="57" y="552" width="446" height="70" rx="10" fill="#4a9b67"/>
<svg x="543" y="198" width="276" height="384" viewBox="0 0 283 365" preserveAspectRatio="none"><rect width="283" height="365" fill="#e9f7ee"/><polygon points="88.3,0 102.5,0 116.7,30.2" fill="#fff"/><polygon points="127.6,0 148.5,0 141,23.5" fill="#fff"/><polygon points="208,0 217.2,0 202.1,20.1" fill="#fff"/><polygon points="234.8,0 276.6,0 223.9,41.9" fill="#fff"/><polygon points="283,20.1 283,30.2 266.6,35.2" fill="#fff"/><polygon points="283,70.4 283,83.8 248.2,90.5" fill="#fff"/><polygon points="283,141.5 283,154 239.8,144.9" fill="#fff"/><polygon points="283,179.2 283,205 219.7,170.8" fill="#fff"/><polygon points="0,40.2 90.8,105.5 0,75.4" fill="#fff"/><polygon points="0,108 0,120.6 37.2,118.1" fill="#fff"/><polygon points="0,139 0,154.1 64,139.8" fill="#fff"/><polygon points="0,187.6 0,208 32.2,174.2" fill="#fff"/><polygon points="17.1,10.1 21.3,10.9 20.5,13.4" fill="#fff"/><polygon points="34.7,5.9 38.9,5.1 38,8.4" fill="#fff"/><polygon points="53.1,46.9 62.3,57 53.9,54.5" fill="#fff"/><polygon points="95.8,47.8 103.3,57.8 98.3,55.3" fill="#fff"/><polygon points="112.5,48.6 121.8,51.1 115.1,56.1" fill="#fff"/><polygon points="181.2,11.8 182.9,13.4 180.3,16" fill="#fff"/><polygon points="244.8,48.6 255.7,46.1 250.7,44.4" fill="#fff"/><polygon points="225.5,76.2 235.6,78.7 228,79.6" fill="#fff"/><polygon points="33,101.3 42.2,104.7 36.4,106.4" fill="#fff"/>
<ellipse cx="142" cy="229" rx="92" ry="6" fill="#20302a" opacity=".2" />
<svg x="-8" y="-10" width="300" height="215" viewBox="0 0 1792 1284">
 <defs><linearGradient id="sg" x1="0.2" y1="0" x2="0.8" y2="1"><stop offset="0" stop-color="#555856"/><stop offset=".55" stop-color="#3c3e3d"/><stop offset="1" stop-color="#2a2c2b"/></linearGradient>
 <pattern id="ht" width="11" height="11" patternUnits="userSpaceOnUse" patternTransform="rotate(62)"><rect width="11" height="11" fill="#666967"/><rect width="5" height="11" fill="#3b3d3c"/></pattern></defs>
 <path d="M262 1135 L300 1100 L380 1040 L470 975 L560 910 L640 850 L700 790 L730 748 L760 700 L800 650 L830 610 L852 586 L870 540 L890 480 L905 445 Q920 424 940 445 L960 480 L985 530 Q998 552 1012 556 Q1060 566 1130 545 L1200 520 L1232 512 L1228 440 L1238 380 Q1246 356 1258 385 L1265 440 L1262 515 L1290 540 L1330 590 L1380 650 L1420 700 L1445 715 Q1500 735 1522 772 Q1534 806 1512 834 Q1496 848 1478 856 L1380 900 L1250 955 L1130 1008 L1040 1040 L960 1062 L860 1105 L760 1150 L660 1198 L560 1243 Q500 1252 440 1245 L330 1215 Q285 1195 268 1165 Z" fill="url(#sg)"/>
 <path d="M1236 384 Q1246 360 1256 388 L1262 440 L1259 508 L1236 508 L1232 440 Z" fill="#a4aba6"/><path d="M1243 420 Q1246 396 1250 420 L1252 500 L1242 500 Z" fill="#262827"/>
 <path d="M880 520 L905 445 Q920 424 940 445 L960 480 L985 530 Q998 552 1012 556 L985 640 L968 700 L1200 520 L1262 515 L1290 540 L1000 770 L940 792 L898 760 Z" fill="#2b2d2c"/>
 <path d="M1012 556 Q1060 566 1130 545 L1200 520 L1232 512 L1262 515 L1200 524 L1130 556 Q1060 584 1006 580 Z" fill="#595c5a"/>
 <path d="M730 748 L760 700 L800 650 L830 610 L852 586 L880 596 L892 760 L830 792 L772 792 Z" fill="#1f2121"/>
 <g fill="#0d0d0d"><circle cx="744" cy="752" r="13"/><circle cx="772" cy="712" r="13"/><circle cx="802" cy="672" r="13"/><circle cx="830" cy="634" r="13"/><circle cx="852" cy="604" r="12"/><path d="M838 600 L852 594 L866 660 L852 664 Z"/></g>
 <path d="M946 692 Q958 672 988 662 Q1036 640 1078 612 Q1044 656 1004 688 Q972 712 952 708 Q942 702 946 692 Z" fill="#a6a9a6"/>
 <path d="M262 1135 L300 1100 L380 1040 L470 975 L560 910 Q640 876 666 932 Q640 1004 540 1060 L400 1120 L290 1168 Z" fill="#2f3130"/>
 <path d="M330 1095 L560 930 Q620 900 640 940 Q610 1000 520 1046 L380 1108 Z" fill="#3c3f3d" opacity=".8"/>
 <path d="M600 1030 L700 985 L800 960 L900 900 L1040 830 L1180 770 L1320 720 L1445 715 Q1500 735 1522 772 Q1534 806 1512 834 L1500 830 L1380 880 L1130 985 L960 1040 L760 1090 L620 1130 L540 1160 Z" fill="url(#ht)"/>
 <path d="M600 1030 L700 985 L800 960 L760 1030 L880 930 L870 1000 L1040 850 L1030 930 L1200 790 L1190 870 L1340 740 L1330 810 L1445 728 L1445 715 L1320 720 L1180 770 L1040 830 L900 900 L800 960 Z" fill="#353736"/>
 <path d="M268 1165 L290 1168 L400 1150 L540 1160 L620 1130 L760 1090 L960 1040 L1130 985 L1380 880 L1500 830 L1512 834 Q1496 848 1478 856 L1380 900 L1250 955 L1130 1008 L1040 1040 L960 1062 L860 1105 L760 1150 L660 1198 L560 1243 Q500 1252 440 1245 L330 1215 Q285 1195 268 1165 Z" fill="#1d1f1e"/>
 <path d="M340 1200 L460 1220 L600 1190 L760 1125 L960 1055 L1130 1000 L1380 892 L1490 846" fill="none" stroke="#4a4d4b" stroke-width="9"/>
 <path d="M290 1168 L400 1150 L540 1160 L620 1130 L760 1090 L960 1040 L1130 985 L1380 880 L1500 830" fill="none" stroke="#0f1010" stroke-width="6"/>
 <path d="M262 1135 L300 1100 L380 1040 L470 975 L560 910 L640 850" fill="none" stroke="#6a6d6b" stroke-width="6" opacity=".55"/>
 <path d="M960 1050 Q1060 1040 1130 1002" fill="none" stroke="#c6d26c" stroke-width="8"/><path d="M528 1168 L572 1238" fill="none" stroke="#bccb66" stroke-width="6"/>
</svg></svg>
<text x="449" y="84" font-family="'DejaVu Sans',sans-serif" font-weight="700" font-style="italic" font-size="36" text-anchor="middle" fill="#1a3a28">SPARK</text>
<text x="449" y="122" font-family="'Liberation Sans',sans-serif" font-weight="700" font-size="14" text-anchor="middle" fill="#1e5135">INGYENES EBOOK</text>
<g font-family="'DejaVu Sans',sans-serif" font-weight="700" font-size="38" text-anchor="middle" fill="#1a3a28"><text x="280" y="232">Töltsd le az</text><text x="280" y="288">ingyenes</text><text x="280" y="346">ebookodat</text></g>
<g font-family="'Liberation Sans',sans-serif" font-size="13" fill="#999"><text x="72" y="422">Keresztnév</text><text x="72" y="505">Email</text></g>
<text x="280" y="593" font-family="'Liberation Sans',sans-serif" font-weight="700" font-size="17" text-anchor="middle" fill="#fff">KÜLDD EL NEKEM AZ EBOOKOT</text>
<g font-family="'DejaVu Sans',sans-serif" font-weight="700" font-size="21" fill="#1a3a28"><text x="566" y="527">To choose your</text><text x="566" y="555">running shoes</text></g></svg><svg style="left:1311px;top:1273.1px" width="107.7" height="76.5" viewBox="0 0 900 697" preserveAspectRatio="none"><rect width="900" height="697" fill="#bee5cb"/><polygon points="0,0 60,0 249,150 0,68" fill="#fff"/><polygon points="169,0 206,0 267,76" fill="#fff"/><polygon points="0,125 0,163 151,189" fill="#fff"/><polygon points="0,192 190,250 0,272.5" fill="#fff"/><polygon points="386,0 432,0 427,40" fill="#fff"/><polygon points="666,0 701,0 631,50" fill="#fff"/><polygon points="655,110 763,0 898,0" fill="#fff"/><polygon points="852,99.5 900,66 900,88" fill="#fff"/><polygon points="669,228 900,178 900,211" fill="#fff"/><polygon points="774,353 900,381 900,432" fill="#fff"/><polygon points="78,105.5 116,122.6 94,127" fill="#fff"/><polygon points="293,38 307,21 303,68" fill="#fff"/><polygon points="351.7,48.5 377,57 360,71.7" fill="#fff"/><polygon points="514.3,44.3 523,50.8 515.5,57" fill="#fff"/><polygon points="586,11 595.4,16.3 586,29" fill="#fff"/><polygon points="734,85.2 758.4,94 723,104" fill="#fff"/><polygon points="825.7,144.1 849.5,142.3 832.7,153.9" fill="#fff"/><polygon points="865.8,288 874.7,289.5 869.8,296" fill="#fff"/><polygon points="54.5,306.6 65,312 57,315.6" fill="#fff"/><polygon points="55,421 61,412 78.6,410" fill="#fff"/><polygon points="0,362 159,332 0,398" fill="#fff" opacity="0.76"/><polygon points="0,497 162,486.5 3,689 0,697" fill="#fff" opacity="0.76"/><polygon points="707,427 900,517.6 900,593.6" fill="#fff" opacity="0.76"/><rect x="52" y="478" width="451" height="74" rx="8" fill="#4a9b67"/>
<svg x="559" y="260" width="244" height="345" viewBox="0 0 283 365" preserveAspectRatio="none"><rect width="283" height="365" fill="#e9f7ee"/><polygon points="88.3,0 102.5,0 116.7,30.2" fill="#fff"/><polygon points="127.6,0 148.5,0 141,23.5" fill="#fff"/><polygon points="208,0 217.2,0 202.1,20.1" fill="#fff"/><polygon points="234.8,0 276.6,0 223.9,41.9" fill="#fff"/><polygon points="283,20.1 283,30.2 266.6,35.2" fill="#fff"/><polygon points="283,70.4 283,83.8 248.2,90.5" fill="#fff"/><polygon points="283,141.5 283,154 239.8,144.9" fill="#fff"/><polygon points="283,179.2 283,205 219.7,170.8" fill="#fff"/><polygon points="0,40.2 90.8,105.5 0,75.4" fill="#fff"/><polygon points="0,108 0,120.6 37.2,118.1" fill="#fff"/><polygon points="0,139 0,154.1 64,139.8" fill="#fff"/><polygon points="0,187.6 0,208 32.2,174.2" fill="#fff"/><polygon points="17.1,10.1 21.3,10.9 20.5,13.4" fill="#fff"/><polygon points="34.7,5.9 38.9,5.1 38,8.4" fill="#fff"/><polygon points="53.1,46.9 62.3,57 53.9,54.5" fill="#fff"/><polygon points="95.8,47.8 103.3,57.8 98.3,55.3" fill="#fff"/><polygon points="112.5,48.6 121.8,51.1 115.1,56.1" fill="#fff"/><polygon points="181.2,11.8 182.9,13.4 180.3,16" fill="#fff"/><polygon points="244.8,48.6 255.7,46.1 250.7,44.4" fill="#fff"/><polygon points="225.5,76.2 235.6,78.7 228,79.6" fill="#fff"/><polygon points="33,101.3 42.2,104.7 36.4,106.4" fill="#fff"/>
<ellipse cx="142" cy="229" rx="92" ry="6" fill="#20302a" opacity=".2" />
<svg x="-8" y="-10" width="300" height="215" viewBox="0 0 1792 1284">
 <defs><linearGradient id="sg" x1="0.2" y1="0" x2="0.8" y2="1"><stop offset="0" stop-color="#555856"/><stop offset=".55" stop-color="#3c3e3d"/><stop offset="1" stop-color="#2a2c2b"/></linearGradient>
 <pattern id="ht" width="11" height="11" patternUnits="userSpaceOnUse" patternTransform="rotate(62)"><rect width="11" height="11" fill="#666967"/><rect width="5" height="11" fill="#3b3d3c"/></pattern></defs>
 <path d="M262 1135 L300 1100 L380 1040 L470 975 L560 910 L640 850 L700 790 L730 748 L760 700 L800 650 L830 610 L852 586 L870 540 L890 480 L905 445 Q920 424 940 445 L960 480 L985 530 Q998 552 1012 556 Q1060 566 1130 545 L1200 520 L1232 512 L1228 440 L1238 380 Q1246 356 1258 385 L1265 440 L1262 515 L1290 540 L1330 590 L1380 650 L1420 700 L1445 715 Q1500 735 1522 772 Q1534 806 1512 834 Q1496 848 1478 856 L1380 900 L1250 955 L1130 1008 L1040 1040 L960 1062 L860 1105 L760 1150 L660 1198 L560 1243 Q500 1252 440 1245 L330 1215 Q285 1195 268 1165 Z" fill="url(#sg)"/>
 <path d="M1236 384 Q1246 360 1256 388 L1262 440 L1259 508 L1236 508 L1232 440 Z" fill="#a4aba6"/><path d="M1243 420 Q1246 396 1250 420 L1252 500 L1242 500 Z" fill="#262827"/>
 <path d="M880 520 L905 445 Q920 424 940 445 L960 480 L985 530 Q998 552 1012 556 L985 640 L968 700 L1200 520 L1262 515 L1290 540 L1000 770 L940 792 L898 760 Z" fill="#2b2d2c"/>
 <path d="M1012 556 Q1060 566 1130 545 L1200 520 L1232 512 L1262 515 L1200 524 L1130 556 Q1060 584 1006 580 Z" fill="#595c5a"/>
 <path d="M730 748 L760 700 L800 650 L830 610 L852 586 L880 596 L892 760 L830 792 L772 792 Z" fill="#1f2121"/>
 <g fill="#0d0d0d"><circle cx="744" cy="752" r="13"/><circle cx="772" cy="712" r="13"/><circle cx="802" cy="672" r="13"/><circle cx="830" cy="634" r="13"/><circle cx="852" cy="604" r="12"/><path d="M838 600 L852 594 L866 660 L852 664 Z"/></g>
 <path d="M946 692 Q958 672 988 662 Q1036 640 1078 612 Q1044 656 1004 688 Q972 712 952 708 Q942 702 946 692 Z" fill="#a6a9a6"/>
 <path d="M262 1135 L300 1100 L380 1040 L470 975 L560 910 Q640 876 666 932 Q640 1004 540 1060 L400 1120 L290 1168 Z" fill="#2f3130"/>
 <path d="M330 1095 L560 930 Q620 900 640 940 Q610 1000 520 1046 L380 1108 Z" fill="#3c3f3d" opacity=".8"/>
 <path d="M600 1030 L700 985 L800 960 L900 900 L1040 830 L1180 770 L1320 720 L1445 715 Q1500 735 1522 772 Q1534 806 1512 834 L1500 830 L1380 880 L1130 985 L960 1040 L760 1090 L620 1130 L540 1160 Z" fill="url(#ht)"/>
 <path d="M600 1030 L700 985 L800 960 L760 1030 L880 930 L870 1000 L1040 850 L1030 930 L1200 790 L1190 870 L1340 740 L1330 810 L1445 728 L1445 715 L1320 720 L1180 770 L1040 830 L900 900 L800 960 Z" fill="#353736"/>
 <path d="M268 1165 L290 1168 L400 1150 L540 1160 L620 1130 L760 1090 L960 1040 L1130 985 L1380 880 L1500 830 L1512 834 Q1496 848 1478 856 L1380 900 L1250 955 L1130 1008 L1040 1040 L960 1062 L860 1105 L760 1150 L660 1198 L560 1243 Q500 1252 440 1245 L330 1215 Q285 1195 268 1165 Z" fill="#1d1f1e"/>
 <path d="M340 1200 L460 1220 L600 1190 L760 1125 L960 1055 L1130 1000 L1380 892 L1490 846" fill="none" stroke="#4a4d4b" stroke-width="9"/>
 <path d="M290 1168 L400 1150 L540 1160 L620 1130 L760 1090 L960 1040 L1130 985 L1380 880 L1500 830" fill="none" stroke="#0f1010" stroke-width="6"/>
 <path d="M262 1135 L300 1100 L380 1040 L470 975 L560 910 L640 850" fill="none" stroke="#6a6d6b" stroke-width="6" opacity=".55"/>
 <path d="M960 1050 Q1060 1040 1130 1002" fill="none" stroke="#c6d26c" stroke-width="8"/><path d="M528 1168 L572 1238" fill="none" stroke="#bccb66" stroke-width="6"/>
</svg></svg>
<text x="449" y="84" font-family="'DejaVu Sans',sans-serif" font-weight="700" font-style="italic" font-size="36" text-anchor="middle" fill="#1a3a28">SPARK</text>
<g font-family="'DejaVu Sans',sans-serif" font-weight="700" font-size="25" text-anchor="middle" fill="#1a3a28"><text x="449" y="149">Köszönjük, hogy letöltötted az</text><text x="449" y="186">útmutatónkat!</text></g>
<g font-family="'Liberation Sans',sans-serif" font-size="17" text-anchor="middle" fill="#1e5135"><text x="277" y="341">Szeretnél hozzávaló kiegészítőket vásárolni,</text><text x="277" y="379">addig is küldünk egy ajándék kuponkódot.</text></g>
<text x="277" y="521" font-family="'Liberation Sans',sans-serif" font-weight="700" font-size="15" text-anchor="middle" fill="#fff">LÁTOGASS EL AZ ÁRUHÁZBA ÉS VÁSÁROLJ!</text>
<g font-family="'DejaVu Sans',sans-serif" font-weight="700" font-size="18" fill="#1a3a28"><text x="580" y="553">To choose your</text><text x="580" y="578">running shoes</text></g></svg><i class="a" style="left:1169.2px;top:1265.2px;width:7.4px;height:7.4px;border-radius:50%;background:#1f2126"></i><i class="a" style="left:1180.3px;top:1265.2px;width:7.4px;height:7.4px;border-radius:50%;background:#1f2126"></i><i class="a" style="left:1191.3px;top:1265.2px;width:7.4px;height:7.4px;border-radius:50%;background:#1f2126"></i><i class="a" style="left:1429.3px;top:1265.2px;width:7.4px;height:7.4px;border-radius:50%;background:#1f2126"></i><i class="a" style="left:1440.4px;top:1265.2px;width:7.4px;height:7.4px;border-radius:50%;background:#1f2126"></i><i class="a" style="left:1451.4px;top:1265.2px;width:7.4px;height:7.4px;border-radius:50%;background:#1f2126"></i><div class="a" style="left:1516.2px;top:1240.2px;width:215.4px;height:143.2px;border-radius:8px;background:#f3f3f3;overflow:hidden">
<svg width="216" height="144" viewBox="1516.2 1240.2 216 144" style="left:0;top:0" fill="#d9d9d9">
<rect x="1529.1" y="1243.4" width="197.6" height="46.9" rx="1.5"/><rect x="1529.1" y="1293.7" width="197.6" height="46.7" rx="1.5"/>
<rect x="1529.1" y="1343.8" width="63.9" height="28.1" rx="1.5"/><rect x="1596" y="1343.8" width="64" height="28.1" rx="1.5"/><rect x="1662.7" y="1343.8" width="64" height="28.1" rx="1.5"/>
<rect x="1529.1" y="1374.9" width="63.9" height="2.9"/><rect x="1596" y="1374.9" width="64" height="2.9"/><rect x="1662.7" y="1374.9" width="64" height="2.9"/>
<rect x="1529.1" y="1379" width="63.9" height="2.8"/><rect x="1596" y="1379" width="64" height="2.8"/><rect x="1662.7" y="1379" width="64" height="2.8"/>
<rect x="1518.8" y="1373.6" width="33.7" height="7.6" rx="1.5" fill="#fff"/><rect x="1525" y="1376.8" width="18" height="1.2" fill="#555"/>
<g fill="none" stroke="#b9bdc9" stroke-width="3.2" stroke-linecap="round" stroke-linejoin="round"><path d="M1612.5 1304.5 Q1606 1311 1607.5 1315 Q1613 1325.5 1624 1325.5 Q1628.5 1325.5 1632 1323.6 M1619.5 1300.6 Q1621.6 1300.2 1624 1300.2 Q1635 1300.2 1640.5 1311 Q1640 1314 1637 1317.6 M1607 1295.6 L1640.4 1328.6"/><path d="M1620 1308 Q1617.6 1313 1621 1316.6 Q1624.6 1319.4 1628.6 1317"/></g>
</svg></div><i class="a" style="left:1687.9px;top:1265.3px;width:7.4px;height:7.4px;border-radius:50%;background:#1f2126"></i><i class="a" style="left:1699.0px;top:1265.3px;width:7.4px;height:7.4px;border-radius:50%;background:#1f2126"></i><i class="a" style="left:1710.0px;top:1265.3px;width:7.4px;height:7.4px;border-radius:50%;background:#1f2126"></i><div class="a" style="left:1775.6px;top:1240.2px;width:215px;height:143.2px;border-radius:8px;border:1.5px solid #e7e8ec;background:#fff"></div><svg style="left:1780px;top:1293px" width="40" height="40" viewBox="1780 1293 40 40" fill="none" stroke="#4b5162" stroke-width="3.4" stroke-linecap="round"><circle cx="1799" cy="1312.1" r="13.1"/><path d="M1799 1305.4 V1318.8 M1792.3 1312.1 H1805.7"/></svg><span class="t" id="t51" style="top:1303.6px;font:700 18.2px/1 'Liberation Sans', sans-serif;color:#4b5162;letter-spacing:-0.64px;left:1824.0px;">Új oldal hozzáadása</span><span class="t" id="t52" style="top:1396.3px;font:700 19.5px/1 'Liberation Sans', sans-serif;color:#dd6239;letter-spacing:-0.30px;left:705.3px;width:800px;text-align:center;text-indent:-0.30px;">Main page</span><span class="t" id="t53" style="top:1396.3px;font:700 19.5px/1 'Liberation Sans', sans-serif;color:#4b5162;letter-spacing:-0.62px;left:964.3px;width:800px;text-align:center;text-indent:-0.62px;">Thank you</span><span class="t" id="t54" style="top:1396.3px;font:700 19.5px/1 'Liberation Sans', sans-serif;color:#b5b9c6;letter-spacing:-0.48px;left:1223.5px;width:800px;text-align:center;text-indent:-0.48px;">Ajánló fül</span>
<!-- right -->

<svg style="left:2376px;top:80px" width="496" height="1352" viewBox="2376 80 496 1352" fill="none" stroke-linecap="round" stroke-linejoin="round">
 <g stroke="#4b5162" stroke-width="3.4">
  <path d="M2414 126.4 L2403.4 136.4 L2414 146.4" stroke-width="3.2"/>
  <path d="M2790.1 250.6 L2790.6 246.4 L2796.6 246.4 L2797.1 250.6 L2799.5 251.6 L2802.9 249.0 L2807.1 253.2 L2804.5 256.6 L2805.5 259.0 L2809.7 259.5 L2809.7 265.5 L2805.5 266.0 L2804.5 268.4 L2807.1 271.8 L2802.9 276.0 L2799.5 273.4 L2797.1 274.4 L2796.6 278.6 L2790.6 278.6 L2790.1 274.4 L2787.7 273.4 L2784.3 276.0 L2780.1 271.8 L2782.7 268.4 L2781.7 266.0 L2777.5 265.5 L2777.5 259.5 L2781.7 259.0 L2782.7 256.6 L2780.1 253.2 L2784.3 249.0 L2787.7 251.6 Z" stroke-width="3.5"/><circle cx="2793.6" cy="262.5" r="5.2" stroke-width="3.5"/>
  <g stroke-width="3.2"><path d="M2718.4 258.1 L2725.9 265.9 L2733.4 258.1"/><path d="M2789.0 1238.6999999999998 L2796.5 1246.5 L2804.0 1238.6999999999998"/></g>
  <g stroke-width="3.3"><path d="M2512.8 1081.6000000000001 L2520.8 1089.2 L2528.8 1081.6000000000001"/><path d="M2512.8 1390.6000000000001 L2520.8 1398.2 L2528.8 1390.6000000000001"/></g>
  <path d="M2777.4 1168.2 V1176.6 Q2777.4 1180.6 2781.4 1180.6 H2806 Q2810 1180.6 2810 1176.6 V1168.2 M2793.7 1171.6 V1150 M2785 1157.8 L2793.7 1149.2 L2802.4 1157.8" stroke-width="3.5"/>
 </g>
 <g stroke="#dd6239" stroke-width="3.1"><circle cx="2421.2" cy="525" r="14.2"/><path d="M2421.2 518.2 V531.8 M2414.4 525 H2428"/></g>
</svg>
<div class="a" style="left:2405px;top:233px;width:346px;height:58px;border:1px solid #d2d5dd;border-radius:6.5px"></div>
<div class="a" style="left:2405px;top:352px;width:315px;height:56px;border:1px solid #d2d5dd;border-radius:6.5px"></div>
<div class="tog" style="left:2756px;top:440px"><i></i></div>
<div class="tog" style="left:2756px;top:566px"><i></i></div>
<div class="a" style="left:2405px;top:628px;width:416px;height:1px;background:#e2e2e4"></div>
<div class="a" style="left:2613px;top:718px;width:208px;height:58px;border-radius:9px;background:#9fa5a0;border:1px solid #dcdee3"></div>
<div class="a" style="left:2405px;top:1114px;width:416px;height:1px;background:#e2e2e4"></div>
<div class="a" style="left:2610px;top:1215px;width:211px;height:57px;border:1px solid #d2d5dd;border-radius:6.5px"></div>
<div class="a" style="left:2613px;top:1294px;width:208px;height:57px;border-radius:9px;background:#1a3a28;border:1px solid #dcdee3"></div>
<div class="a" style="left:2405px;top:1423px;width:416px;height:1px;background:#d6d6d8"></div>
<div class="a" style="left:2858px;top:178px;width:20px;height:894px;border-radius:8px;background:#d3d4da"></div>
<div class="sc" style="left:2405px;top:844px;border-color:#dd6239;border-width:1.3px;background:#f4f7fb;"><b style="top:18.1px"></b><b style="top:48.8px"></b><u style="top:11.2px;border-color:#c7cbd9;background:#fff;border-radius:5px"></u><u style="top:41.8px;border-color:#c7cbd9;background:#fff;border-radius:5px"></u><svg width="50" height="50" style="left:-1px;top:-1px"><path d="M17.9 23.7 L22.4 27.9 L29.3 20.2" stroke="#6fc98a" stroke-width="2.9" fill="none" stroke-linecap="butt" stroke-linejoin="miter"/></svg></div><div class="sc" style="left:2542px;top:844px;"><b style="top:18.1px"></b><b style="top:48.8px"></b><u style="top:11.2px;border-color:#6fc98a;background:#fff;border-radius:5px"></u><u style="top:41.8px;border-color:#c7cbd9;background:#fff;border-radius:5px"></u><svg width="50" height="50" style="left:-1px;top:-1px"><path d="M17.9 23.7 L22.4 27.9 L29.3 20.2" stroke="#6fc98a" stroke-width="2.9" fill="none" stroke-linecap="butt" stroke-linejoin="miter"/></svg></div><div class="sc" style="left:2679.5px;top:844px;"><b style="top:18.1px"></b><b style="top:48.8px"></b><u style="top:11.2px;border-color:#6fc98a;background:#6fc98a;border-radius:12px"></u><u style="top:41.8px;border-color:#c7cbd9;background:#fff;border-radius:12px"></u><svg width="50" height="50" style="left:-1px;top:-1px"><path d="M17.9 23.7 L22.4 27.9 L29.3 20.2" stroke="#fff" stroke-width="2.9" fill="none" stroke-linecap="butt" stroke-linejoin="miter"/></svg></div><div class="sc" style="left:2405px;top:950px;"><b style="top:18.1px"></b><b style="top:48.8px"></b><u style="top:11.2px;border-color:#d6d6d8;background:#e9e9ea;border-radius:5px"></u><u style="top:41.8px;border-color:#d6d6d8;background:#e9e9ea;border-radius:5px"></u><svg width="50" height="50" style="left:-1px;top:-1px"><path d="M17.9 23.7 L22.4 27.9 L29.3 20.2" stroke="#6fc98a" stroke-width="2.9" fill="none" stroke-linecap="butt" stroke-linejoin="miter"/></svg></div><div class="sc" style="left:2542px;top:950px;"><b style="top:18.1px"></b><b style="top:48.8px"></b><u style="top:11.2px;border-color:#6fc98a;background:#6fc98a;border-radius:5px"></u><u style="top:41.8px;border-color:#6fc98a;background:#fff;border-radius:5px"></u><svg width="50" height="50" style="left:-1px;top:-1px"><path d="M17.9 23.7 L22.4 27.9 L29.3 20.2" stroke="#fff" stroke-width="2.9" fill="none" stroke-linecap="butt" stroke-linejoin="miter"/></svg></div><span class="t" id="t55" style="top:119.1px;font:700 33px/1 'Liberation Sans', sans-serif;color:#252627;letter-spacing:-2.04px;left:2447.6px;">Checkbox</span><span class="t" id="t56" style="top:198.6px;font:400 22px/1 'Liberation Sans', sans-serif;color:#4b5162;letter-spacing:-0.51px;-webkit-text-stroke:0.35px #4b5162;left:2404.8px;">Típus</span><span class="t" id="t57" style="top:248.8px;font:400 25px/1 'Liberation Sans', sans-serif;color:#4b5162;letter-spacing:-0.32px;-webkit-text-stroke:0.35px #4b5162;left:2427.0px;">Új checkbox 1</span><span class="t" id="t58" style="top:317.7px;font:400 22px/1 'Liberation Sans', sans-serif;color:#4b5162;letter-spacing:-0.22px;-webkit-text-stroke:0.35px #4b5162;left:2404.5px;">Opciók</span><span class="t" id="t59" style="top:368.4px;font:400 25px/1 'Liberation Sans', sans-serif;color:#4b5162;letter-spacing:0.00px;-webkit-text-stroke:0.35px #4b5162;left:2427.0px;">Szeretnék marketing cél</span><span class="t" id="t60" style="top:447.9px;font:400 22px/1 'Liberation Sans', sans-serif;color:#4b5162;letter-spacing:-0.23px;-webkit-text-stroke:0.35px #4b5162;left:2404.6px;">Linkké alakítás</span><span class="t" id="t61" style="top:511.8px;font:400 25px/1 'Liberation Sans', sans-serif;color:#dd6239;letter-spacing:0.04px;-webkit-text-stroke:0.7px #dd6239;left:2451.6px;">Új opció hozzáadása</span><span class="t" id="t62" style="top:573.4px;font:400 22px/1 'Liberation Sans', sans-serif;color:#4b5162;letter-spacing:-0.45px;-webkit-text-stroke:0.35px #4b5162;left:2404.6px;">Kötelező?</span><span class="t" id="t63" style="top:663.8px;font:700 25px/1 'Liberation Sans', sans-serif;color:#232426;letter-spacing:-0.48px;left:2404.0px;">Megjelenés</span><span class="t" id="t64" style="top:735.4px;font:400 22px/1 'Liberation Sans', sans-serif;color:#4b5162;letter-spacing:-1.04px;-webkit-text-stroke:0.35px #4b5162;left:2404.5px;">Szín</span><span class="t" id="t65" style="top:801.1px;font:400 22px/1 'Liberation Sans', sans-serif;color:#4b5162;letter-spacing:-0.33px;-webkit-text-stroke:0.35px #4b5162;left:2404.5px;">Stílus</span><span class="t" id="t66" style="top:1074.7px;font:400 22px/1 'Liberation Sans', sans-serif;color:#4b5162;letter-spacing:-0.08px;-webkit-text-stroke:0.35px #4b5162;left:2542.0px;">További beállítások</span><span class="t" id="t67" style="top:1151.6px;font:700 25px/1 'Liberation Sans', sans-serif;color:#232426;letter-spacing:-0.70px;left:2404.0px;">Betűtípus</span><span class="t" id="t68" style="top:1232.4px;font:400 22px/1 'Liberation Sans', sans-serif;color:#4b5162;letter-spacing:-0.14px;-webkit-text-stroke:0.35px #4b5162;left:2404.0px;">Betűtípus</span><span class="t" id="t69" style="top:1229.1px;font:400 25px/1 'Liberation Sans', sans-serif;color:#4b5162;letter-spacing:-0.36px;-webkit-text-stroke:0.35px #4b5162;left:2633.5px;">source-san...</span><span class="t" id="t70" style="top:1310.9px;font:400 22px/1 'Liberation Sans', sans-serif;color:#4b5162;letter-spacing:-0.30px;-webkit-text-stroke:0.35px #4b5162;left:2404.0px;">Betűszín</span><span class="t" id="t71" style="top:1383.8px;font:400 22px/1 'Liberation Sans', sans-serif;color:#4b5162;letter-spacing:-0.08px;-webkit-text-stroke:0.35px #4b5162;left:2542.0px;">További beállítások</span><div class="a" style="left:2758px;top:1316px;width:86px;height:86px;border-radius:50%;background:#dd6239;box-shadow:0 4px 16px rgba(0,0,0,.18);z-index:5"></div>
<svg style="left:2778px;top:1336px;z-index:6" width="46" height="46" viewBox="-23 -23 46 46" fill="none" stroke-linecap="round">
 <ellipse cx="-13.6" cy="3.4" rx="3.6" ry="4.4" fill="#dd6239" stroke="#fff" stroke-width="1.3"/>
 <g transform="rotate(-12)"><ellipse cx="1.4" cy="0.8" rx="15" ry="18.2" fill="#dd6239" stroke="#fff" stroke-width="1.3"/><ellipse cx="1.4" cy="0.8" rx="12.2" ry="15.4" fill="#fff"/></g>
 <ellipse cx="-12.6" cy="3.2" rx="1.8" ry="2.6" fill="#fff"/>
 <ellipse cx="-10.6" cy="2.6" rx="2.3" ry="3.4" fill="#8a8a8a" transform="rotate(-10 -10.6 2.6)"/>
 <path d="M-10.5 -1 Q-6 -17 8.5 -12.5 Q11.5 -9 12.5 1" stroke="#333" stroke-width="1"/>
 <path d="M-9.6 5.4 Q-4 9.6 2.6 9" stroke="#444" stroke-width="0.9"/><ellipse cx="3.2" cy="9" rx="1.6" ry="0.9" fill="#333"/>
 <path d="M-3.4 -1.6 Q-1.6 -4 0.6 -2" stroke="#222" stroke-width="1.2"/><path d="M9 -3 Q10.6 -4.6 12 -3" stroke="#222" stroke-width="1.2"/>
 <path d="M5 2.6 Q5.4 5.6 7 2.6" stroke="#222" stroke-width="1.1"/>
 <g fill="#dd6239"><rect x="1.4" y="-9.4" width="1.5" height="1.5"/><rect x="3.8" y="-9.8" width="1.5" height="1.5"/><rect x="1.8" y="-6.8" width="1.5" height="1.5"/><rect x="4.2" y="-7.2" width="1.5" height="1.5"/><rect x="2.6" y="-4.2" width="1.5" height="1.5"/><rect x="5" y="-4.6" width="1.5" height="1.5"/></g>
</svg>
<!-- overlay -->

<div class="a" style="left:160px;top:1352px;width:2712px;height:80px;background:linear-gradient(180deg,rgba(45,45,48,0) 0%,rgba(45,45,48,.035) 45%,rgba(45,45,48,.135) 100%);-webkit-mask-image:linear-gradient(90deg,transparent 0,#000 420px);mask-image:linear-gradient(90deg,transparent 0,#000 420px);pointer-events:none"></div>
<svg style="left:0;top:1412px" width="20" height="20" viewBox="0 0 20 20"><path d="M0 0 Q0 20 20 20 H0 Z" fill="#0b0b0d"/></svg>

</body></html>
